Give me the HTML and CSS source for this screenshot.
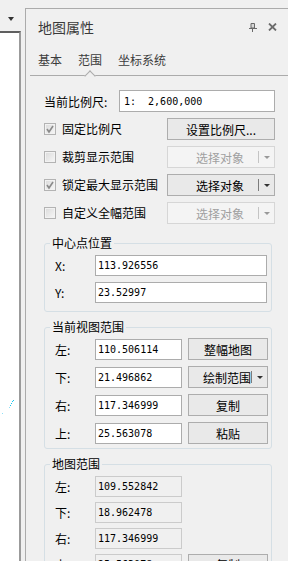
FILE: index.html
```html
<!DOCTYPE html>
<html lang="zh-CN">
<head>
  <meta charset="UTF-8" />
  <meta name="viewport" content="width=device-width, initial-scale=1" />
  <title>地图属性</title>
  <link rel="stylesheet" href="styles.css">
</head>
<body>
<div class="app">
  <div class="side">
    <div class="side-top"><span class="drop"></span></div>
    <div class="map">
      <svg class="dots" width="16" height="18" viewBox="0 0 16 18">
        <rect x="12" y="2" width="1" height="1" fill="#18c8f0"/>
        <rect x="13" y="1" width="1" height="1" fill="#18c8f0"/>
        <rect x="11" y="4" width="1" height="1" fill="#18c8f0"/>
        <rect x="10" y="6" width="1" height="1" fill="#18c8f0"/>
        <rect x="9" y="8" width="1" height="1" fill="#8fe0f8"/>
        <rect x="2" y="14" width="1" height="1" fill="#8fe0f8"/>
      </svg>
    </div>
  </div>

  <div class="panel">
    <div class="head">
      <span class="title">地图属性</span>
      <svg class="pin" width="8" height="9" viewBox="0 0 8 9">
        <path d="M2 0.5h3.5v4.5H2z" fill="#d8d8d8" stroke="#6a6a6a" stroke-width="1"/>
        <path d="M0 5.5h8" stroke="#6a6a6a" stroke-width="1"/>
        <path d="M3.5 6v3" stroke="#6a6a6a" stroke-width="1"/>
      </svg>
      <svg class="close" width="9" height="8" viewBox="0 0 9 8">
        <path d="M1 0.5l7 7M8 0.5l-7 7" stroke="#6c6c6c" stroke-width="1.8"/>
      </svg>
    </div>

    <div class="tabs">
      <span class="tab">基本</span>
      <span class="tab active">范围</span>
      <span class="tab">坐标系统</span>
    </div>

    <div class="content">
      <div class="opts">
        <div class="row">
          <span class="lbl-scale">当前比例尺:</span>
          <input class="box scale" value="1:  2,600,000" readonly>
        </div>
        <div class="row">
          <label class="check"><span class="cb"><svg width="10" height="10" viewBox="0 0 10 10"><path d="M2 5l2 3 4-6" fill="none" stroke="#8a8a8a" stroke-width="1.6"/></svg></span>固定比例尺</label>
          <button class="btn wide">设置比例尺...</button>
        </div>
        <div class="row">
          <label class="check"><span class="cb"></span>裁剪显示范围</label>
          <button class="btn wide split" disabled><span class="txt">选择对象</span><i class="sep"></i><i class="arr"></i></button>
        </div>
        <div class="row">
          <label class="check"><span class="cb"><svg width="10" height="10" viewBox="0 0 10 10"><path d="M2 5l2 3 4-6" fill="none" stroke="#8a8a8a" stroke-width="1.6"/></svg></span>锁定最大显示范围</label>
          <button class="btn wide split"><span class="txt">选择对象</span><i class="sep"></i><i class="arr"></i></button>
        </div>
        <div class="row">
          <label class="check"><span class="cb"></span>自定义全幅范围</label>
          <button class="btn wide split" disabled><span class="txt">选择对象</span><i class="sep"></i><i class="arr"></i></button>
        </div>
      </div>

      <fieldset class="group g-center">
        <legend>中心点位置</legend>
        <div class="grow"><span class="glbl">X:</span><input class="box num full" value="113.926556" readonly></div>
        <div class="grow"><span class="glbl">Y:</span><input class="box num full" value="23.52997" readonly></div>
      </fieldset>

      <fieldset class="group g-view">
        <legend>当前视图范围</legend>
        <div class="grow"><span class="glbl">左:</span><input class="box num" value="110.506114" readonly><button class="btn small">整幅地图</button></div>
        <div class="grow"><span class="glbl">下:</span><input class="box num" value="21.496862" readonly><button class="btn small split"><span class="txt">绘制范围</span><i class="sep"></i><i class="arr"></i></button></div>
        <div class="grow"><span class="glbl">右:</span><input class="box num" value="117.346999" readonly><button class="btn small">复制</button></div>
        <div class="grow"><span class="glbl">上:</span><input class="box num" value="25.563078" readonly><button class="btn small">粘贴</button></div>
      </fieldset>

      <fieldset class="group g-map">
        <legend>地图范围</legend>
        <div class="grow"><span class="glbl">左:</span><input class="box num off" value="109.552842" readonly></div>
        <div class="grow"><span class="glbl">下:</span><input class="box num off" value="18.962478" readonly></div>
        <div class="grow"><span class="glbl">右:</span><input class="box num off" value="117.346999" readonly></div>
        <div class="grow"><span class="glbl">上:</span><input class="box num off" value="25.563078" readonly><button class="btn small">复制</button></div>
      </fieldset>
    </div>
  </div>
</div>
</body>
</html>
```

FILE: styles.css
```css
* {
  box-sizing: border-box;
}

body {
  margin: 0;
  width: 288px;
  height: 561px;
  overflow: hidden;
  background: #f0f0f0;
  font-family: "Noto Sans CJK SC", sans-serif;
  font-size: 12px;
  color: #000;
}

.app {
  display: flex;
  height: 561px;
}

/* left strip with the map */
.side {
  width: 25px;
  flex: none;
  display: flex;
  flex-direction: column;
}

.side-top {
  flex: none;
  height: 31px;
  padding: 17px 0 0 8px;
}

.drop {
  display: block;
  width: 0;
  height: 0;
  border-left: 3.5px solid transparent;
  border-right: 3.5px solid transparent;
  border-top: 4px solid #333;
}

.map {
  position: relative;
  width: 21px;
  flex: 1;
  background: #fff;
  border-top: 2px solid #5f5f5f;
  border-right: 2px solid #9b9b9b;
}

.dots {
  position: absolute;
  left: 0;
  top: 366px;
}

/* panel */
.panel {
  flex: 1;
  min-width: 0;
  margin-top: 8px;
  border-top: 1px solid #ababab;
  border-left: 1px solid #ababab;
  display: flex;
  flex-direction: column;
}

.head {
  flex: none;
  height: 36px;
  display: flex;
  align-items: center;
  padding: 0 11px 0 12px;
}

.title {
  flex: 1;
  font-size: 14px;
  line-height: 16px;
  color: #3a3a3a;
}

.pin {
  margin-right: 11px;
}

.tabs {
  flex: none;
  display: flex;
  gap: 16px;
  height: 31px;
  margin-left: 4px;
  padding-left: 8px;
  border-bottom: 1px solid #ababab;
}

.tab {
  position: relative;
  display: flex;
  align-items: center;
  color: #3c3c3c;
  line-height: 14px;
}

.tab.active::after {
  content: "";
  position: absolute;
  left: 50%;
  bottom: -5px;
  width: 7px;
  height: 7px;
  margin-left: -4.5px;
  background: #f0f0f0;
  border-left: 1px solid #ababab;
  border-top: 1px solid #ababab;
  transform: rotate(45deg);
}

.content {
  flex: none;
  padding: 14px 13px 0 18px;
}

.opts {
  display: flex;
  flex-direction: column;
  gap: 6px;
}

.row {
  height: 22px;
  display: flex;
  align-items: center;
  justify-content: space-between;
}

.lbl-scale {
  width: 75px;
  flex: none;
}

.box {
  height: 21px;
  border: 1px solid #acacac;
  background: #fff;
  padding: 0 2px;
  margin: 0;
  font-family: "DejaVu Sans Mono", monospace;
  font-size: 10px;
  color: #000;
  outline: none;
}

.box.scale {
  flex: 1;
  min-width: 0;
  height: 22px;
  padding: 0 4px;
}

.box.off {
  background: #f0f0f0;
  border-color: #cbcbcb;
}

.check {
  display: flex;
  align-items: center;
  gap: 6px;
  line-height: 14px;
}

.cb {
  width: 12px;
  height: 12px;
  display: flex;
  align-items: center;
  justify-content: center;
  border: 1px solid #b3b3b3;
  background: linear-gradient(135deg, #dadada, #f7f7f7);
  box-shadow: inset 0 0 0 1px #f2f2f2;
}

.btn {
  height: 22px;
  padding: 0;
  margin: 0;
  display: flex;
  align-items: center;
  justify-content: center;
  border: 1px solid #adadad;
  background: #e9e9e9;
  font-family: inherit;
  font-size: 12px;
  color: #000;
}

.btn:disabled {
  border-color: #d6d6d6;
  background: #f4f4f4;
  color: #a0a0a0;
}

.btn.wide {
  width: 108px;
}

.btn.small {
  width: 80px;
  flex: none;
}

.split .txt {
  flex: 1;
  text-align: center;
  padding-left: 14px;
}

.sep {
  width: 1px;
  height: 12px;
  background: #7c7c7c;
}

.btn:disabled .sep {
  background: #c4c4c4;
}

.arr {
  width: 15px;
  display: flex;
  justify-content: center;
}

.arr::before {
  content: "";
  border-left: 3px solid transparent;
  border-right: 3px solid transparent;
  border-top: 3px solid #333;
}

.btn:disabled .arr::before {
  border-top-color: #999;
}

/* group boxes */
.group {
  margin: 0 3px 0 0;
  padding: 5px 4px 8px 10px;
  border: 1px solid #d5dfe5;
  border-radius: 3px;
  min-width: 0;
  display: flex;
  flex-direction: column;
  gap: 6px;
}

.group legend {
  padding: 0 2px;
  margin-left: -5px;
  line-height: 14px;
  font-size: 12px;
}

.g-center {
  margin-top: 12px;
}

.g-view {
  margin-top: 8px;
  padding-top: 4px;
  padding-bottom: 4px;
}

.g-map {
  margin-top: 8px;
  gap: 5px;
}

.grow {
  display: flex;
  align-items: center;
  gap: 6px;
  height: 21px;
}

.g-view .grow {
  height: 22px;
}

.glbl {
  width: 34px;
  flex: none;
}

.box.num {
  width: 87px;
  flex: none;
}

.box.full {
  flex: 1;
  width: auto;
}
```
